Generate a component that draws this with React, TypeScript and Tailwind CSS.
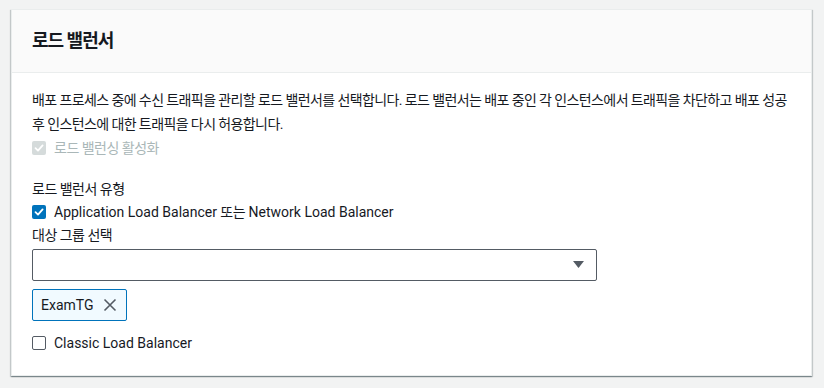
import React from 'react';

const font = { fontFamily: 'Roboto, "Noto Sans CJK KR", sans-serif' };

const CheckBox = ({ checked, disabled }: { checked?: boolean; disabled?: boolean }) => {
  if (!checked) {
    return <span className="w-[14px] h-[14px] rounded-[2px] border border-[#545b64] bg-white shrink-0" />;
  }
  return (
    <span
      className={`w-[14px] h-[14px] rounded-[2px] shrink-0 flex items-center justify-center ${
        disabled ? 'bg-[#d5dbdb]' : 'bg-[#0073bb]'
      }`}
    >
      <svg width="10" height="10" viewBox="0 0 10 10" fill="none">
        <path d="M1.5 5.2 L4 7.6 L8.6 2.4" stroke="white" strokeWidth="1.8" strokeLinecap="round" strokeLinejoin="round" />
      </svg>
    </span>
  );
};

export default function App() {
  return (
    <div className="w-[824px] h-[388px] bg-[#f2f3f3] pt-[9px] pl-[11px]" style={font}>
      <div className="w-[801px] bg-white border border-[#eaeded] shadow-[0_1px_1px_0_rgba(0,28,36,0.3),1px_1px_1px_0_rgba(0,28,36,0.15),-1px_1px_1px_0_rgba(0,28,36,0.15)]">
        <div className="h-[63px] bg-[#fafafa] border-b border-[#eaeded] px-[20px] flex items-center">
          <h2 className="text-[18px] font-bold text-[#16191f] leading-none tracking-[-1px]">로드 밸런서</h2>
        </div>
        <div className="px-[20px] pt-[15px] pb-[20px] text-[14px] text-[#16191f] leading-[22px]">
          <p className="leading-[24px] tracking-[-0.6px]">
            배포 프로세스 중에 수신 트래픽을 관리할 로드 밸런서를 선택합니다. 로드 밸런서는 배포 중인 각 인스턴스에서 트래픽을 차단하고 배포 성공 후 인스턴스에 대한 트래픽을 다시 허용합니다.
          </p>
          <label className="flex items-center gap-[8px] h-[24px] text-[#aab7b8]">
            <CheckBox checked disabled />
            <span className="tracking-[-0.5px]">로드 밸런싱 활성화</span>
          </label>
          <div className="mt-[18px] tracking-[-0.5px]">로드 밸런서 유형</div>
          <label className="flex items-center gap-[8px] h-[24px]">
            <CheckBox checked />
            <span>
              Application Load Balancer <span className="tracking-[-0.5px]">또는</span> Network Load Balancer
            </span>
          </label>
          <div className="tracking-[-0.5px]">대상 그룹 선택</div>
          <div className="mt-[3px] w-[565px] h-[32px] border border-[#545b64] rounded-[2px] flex items-center justify-end pr-[12px]">
            <svg width="11" height="8" viewBox="0 0 11 8">
              <path d="M0 0 H11 L5.5 7 Z" fill="#545b64" />
            </svg>
          </div>
          <div className="mt-[8px] w-[95px] h-[32px] border border-[#0073bb] bg-[#f1faff] rounded-[2px] flex items-center pl-[8px] gap-[9px]">
            <span>ExamTG</span>
            <svg width="14" height="14" viewBox="0 0 14 14">
              <path d="M1.5 1.5 L12.5 12.5 M12.5 1.5 L1.5 12.5" stroke="#545b64" strokeWidth="1.6" />
            </svg>
          </div>
          <label className="mt-[10px] flex items-center gap-[8px] h-[24px]">
            <CheckBox />
            <span>Classic Load Balancer</span>
          </label>
        </div>
      </div>
    </div>
  );
}
